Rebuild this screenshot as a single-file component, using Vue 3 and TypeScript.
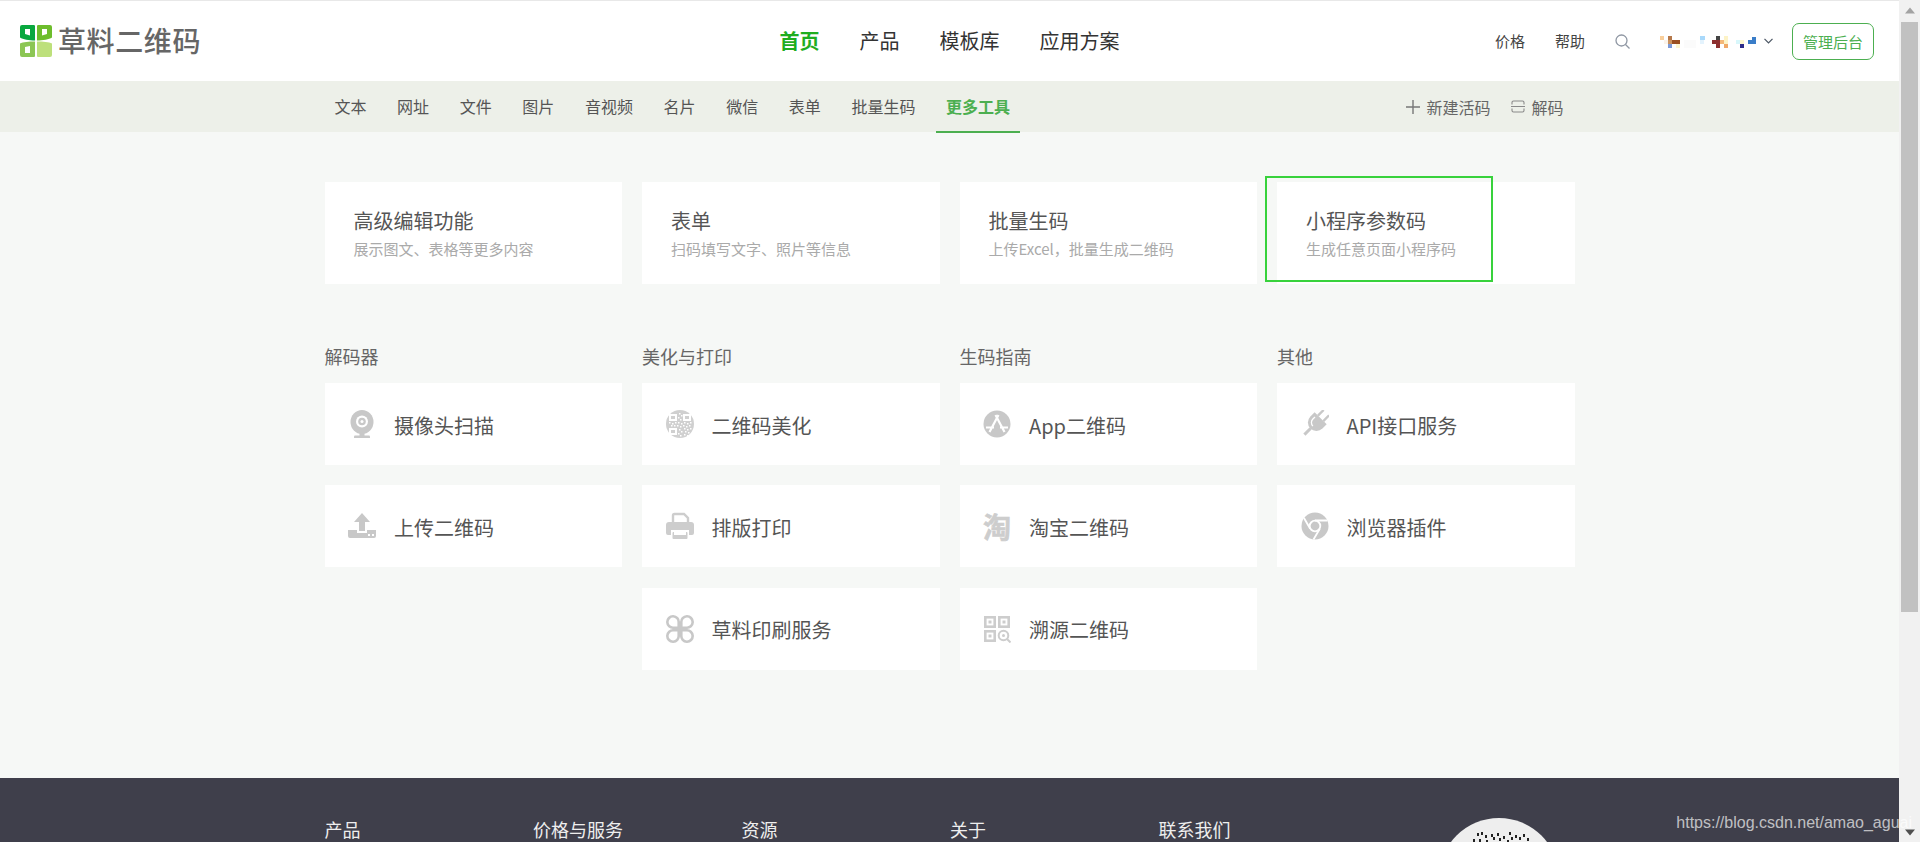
<script setup lang="ts">
type Tile = { icon: string; label: string };
type Section = { title: string; tiles: Tile[] };

const mainNav = ["产品", "模板库", "应用方案"];
const tabs = ["文本", "网址", "文件", "图片", "音视频", "名片", "微信", "表单", "批量生码"];

const cards = [
  { title: "高级编辑功能", desc: "展示图文、表格等更多内容" },
  { title: "表单", desc: "扫码填写文字、照片等信息" },
  { title: "批量生码", desc: "上传Excel，批量生成二维码" },
  { title: "小程序参数码", desc: "生成任意页面小程序码" },
];

const sections: Section[] = [
  {
    title: "解码器",
    tiles: [
      { icon: "cam", label: "摄像头扫描" },
      { icon: "upload", label: "上传二维码" },
    ],
  },
  {
    title: "美化与打印",
    tiles: [
      { icon: "qr", label: "二维码美化" },
      { icon: "print", label: "排版打印" },
      { icon: "clover", label: "草料印刷服务" },
    ],
  },
  {
    title: "生码指南",
    tiles: [
      { icon: "app", label: "App二维码" },
      { icon: "taobao", label: "淘宝二维码" },
      { icon: "trace", label: "溯源二维码" },
    ],
  },
  {
    title: "其他",
    tiles: [
      { icon: "plug", label: "API接口服务" },
      { icon: "chrome", label: "浏览器插件" },
    ],
  },
];

const footerCols = ["产品", "价格与服务", "资源", "关于", "联系我们"];

// blurred-out user name next to the chevron: [x, y, w, h, colour]
const mosaic: [number, number, number, number, string][] = [
  [0, 2, 4, 4, "#f9cf9c"],
  [4, 6, 4, 4, "#fbf3ea"],
  [8, 2, 4, 4, "#b5784a"],
  [8, 6, 4, 4, "#c9925f"],
  [12, 6, 8, 4, "#9a4f22"],
  [8, 10, 4, 4, "#7c9ad8"],
  [16, 10, 4, 4, "#fdf6cf"],
  [24, 6, 12, 8, "#fbfbfb"],
  [40, 2, 5, 4, "#a9d9fb"],
  [40, 6, 4, 4, "#e4f3fd"],
  [56, 2, 4, 4, "#444444"],
  [52, 6, 8, 4, "#8c2f2f"],
  [56, 10, 4, 4, "#8c2f2f"],
  [60, 6, 4, 4, "#f4b878"],
  [64, 2, 4, 8, "#fdf3c6"],
  [64, 10, 4, 4, "#f0a868"],
  [76, 6, 4, 4, "#d8f7fb"],
  [80, 6, 4, 4, "#fdf8cf"],
  [80, 10, 4, 4, "#2d2d8a"],
  [88, 6, 8, 4, "#3a7dc8"],
  [92, 3, 4, 3, "#3a7dc8"],
];

// white specks on the round QR icon
const qrSpecks: [number, number][] = [
  [13, 3], [15, 5], [12, 7], [14, 9], [3, 12], [6, 13], [9, 12], [12, 12], [15, 13], [18, 12],
  [21, 13], [24, 12], [5, 15], [8, 15], [11, 15], [14, 16], [17, 15], [20, 16], [23, 15],
  [13, 19], [15, 21], [12, 23], [14, 25], [18, 18], [21, 19], [24, 18], [19, 21], [22, 22],
  [18, 24], [21, 25],
];

// the top of the footer QR that shows above the fold: [x, y]
const footerDots: [number, number][] = [
  [38, 15], [42, 14], [46, 17], [52, 16], [54, 19], [58, 15], [60, 20], [64, 18],
  [70, 14], [72, 19], [76, 17], [80, 19], [84, 16], [88, 20], [34, 21], [40, 21],
  [47, 22], [68, 22],
];
</script>

<template>
  <div class="screen">
    <div class="page">
      <header class="top">
        <a class="logo">
          <svg class="logo-mark" viewBox="0 0 32 32" width="32" height="32">
            <path fill="#09a83f" fill-rule="evenodd" d="M2 0h12a1.5 1.5 0 0 1 1 1v14.5C9 15.500 3 14.500 0 12.500V2a2 2 0 0 1 2-2zM5 4v5l5 1.500V4z" />
            <path fill="#6dbd2c" fill-rule="evenodd" d="M18 0h12a2 2 0 0 1 2 2v10.500c-3 2-9 3-15 3V1a1.500 1.500 0 0 1 1-1zM22 4v6.500l5-1.500V4z" />
            <path fill="#8cc654" fill-rule="evenodd" d="M0 18.500c3-1.500 9-2 15-2V31a1 1 0 0 1-1 1H2a2 2 0 0 1-2-2zM5 22v6h5v-7z" />
            <path fill="#bde07b" d="M17 16.500c6 0 12 .5 15 2V30a2 2 0 0 1-2 2H18a1 1 0 0 1-1-1z" />
          </svg>
          <span class="logo-text">草料二维码</span>
        </a>

        <nav class="main-nav">
          <a class="main-link main-link--on">首页</a>
          <a v-for="item in mainNav" :key="item" class="main-link">{{ item }}</a>
        </nav>

        <div class="top-right">
          <a class="top-link">价格</a>
          <a class="top-link">帮助</a>
          <svg class="search" viewBox="0 0 15 15" width="15" height="15">
            <circle cx="6.500" cy="6.500" r="5.500" fill="none" stroke="#8f97a3" stroke-width="1.300" />
            <path d="M10.500 10.500L14.500 14.500" stroke="#8f97a3" stroke-width="1.300" />
          </svg>
          <svg class="mosaic" viewBox="0 0 96 14" width="96" height="14">
            <rect v-for="(b, i) in mosaic" :key="i" :x="b[0]" :y="b[1]" :width="b[2]" :height="b[3]" :fill="b[4]" />
          </svg>
          <svg class="chev" viewBox="0 0 9 6" width="9" height="6">
            <path d="M.5 .8L4.500 5L8.500 .8" fill="none" stroke="#4a5563" stroke-width="1.200" />
          </svg>
          <a class="admin">管理后台</a>
        </div>
      </header>

      <div class="subnav">
        <div class="wrap subnav-row">
          <div class="tabs">
            <a v-for="t in tabs" :key="t" class="tab">{{ t }}</a>
            <a class="tab tab--on">更多工具</a>
          </div>
          <div class="sub-actions">
            <a class="sub-action">
              <svg viewBox="0 0 14 14" width="14" height="14">
                <path d="M7 0V14M0 7H14" stroke="#777" stroke-width="1.400" />
              </svg>
              新建活码
            </a>
            <a class="sub-action">
              <svg viewBox="0 0 14 13" width="14" height="13">
                <path d="M1 4.500V2.500A1.500 1.500 0 0 1 2.500 1H11.500A1.500 1.500 0 0 1 13 2.500V4.500M1 8.500V10.500A1.500 1.500 0 0 0 2.500 12H11.500A1.500 1.500 0 0 0 13 10.500V8.500M0 6.500H14" fill="none" stroke="#8a8a8a" stroke-width="1.100" />
              </svg>
              解码
            </a>
          </div>
        </div>
      </div>

      <main class="main">
        <div class="wrap">
          <div class="grid">
            <a v-for="(c, i) in cards" :key="c.title" class="card">
              <div class="card-title">{{ c.title }}</div>
              <div class="card-desc">{{ c.desc }}</div>
              <span v-if="i === 3" class="marker" />
            </a>
          </div>

          <div class="grid sections">
            <section v-for="s in sections" :key="s.title" class="section">
              <h3 class="section-title">{{ s.title }}</h3>
              <a v-for="t in s.tiles" :key="t.label" class="tile">
                <span v-if="t.icon === 'taobao'" class="ico ico-text">淘</span>
                <svg v-else class="ico" viewBox="0 0 28 28" width="28" height="28">
                  <template v-if="t.icon === 'cam'">
                    <ellipse cx="14" cy="12" rx="11.500" ry="12" fill="#c8c8c8" />
                    <circle cx="14" cy="11.500" r="6" fill="#fff" />
                    <circle cx="14" cy="11.500" r="3.800" fill="#c8c8c8" />
                    <circle cx="14" cy="11.500" r="1.500" fill="#fff" />
                    <rect x="11.500" y="23" width="5" height="3" fill="#c8c8c8" />
                    <rect x="6" y="25.500" width="16" height="3" rx="1" fill="#c8c8c8" />
                  </template>
                  <template v-else-if="t.icon === 'upload'">
                    <path fill="#c8c8c8" d="M14 1L22 10H17V19H11V10H6Z" />
                    <path fill="#c8c8c8" d="M0 18H9V21H19V18H28V24A2 2 0 0 1 26 26H2A2 2 0 0 1 0 24Z" />
                    <rect x="20" y="22" width="2" height="2" fill="#fff" />
                    <rect x="24" y="22" width="2" height="2" fill="#fff" />
                  </template>
                  <template v-else-if="t.icon === 'qr'">
                    <circle cx="14" cy="14" r="14" fill="#d0d0d0" />
                    <g fill="#fff">
                      <path fill-rule="evenodd" d="M3 4H11V11H3ZM5 6V9H9V6Z" />
                      <path fill-rule="evenodd" d="M17 4H25V11H17ZM19 6V9H23V6Z" />
                      <path fill-rule="evenodd" d="M3 18H11V25H3ZM5 20V23H9V20Z" />
                      <rect v-for="(p, i) in qrSpecks" :key="i" :x="p[0]" :y="p[1]" width="1.500" height="1.500" />
                    </g>
                  </template>
                  <template v-else-if="t.icon === 'print'">
                    <path fill="none" stroke="#cdcdcd" stroke-width="2.400" d="M7 11V3.500A1.500 1.500 0 0 1 8.500 2H18L22 6V11" />
                    <path fill="#cdcdcd" d="M3 10H25A3 3 0 0 1 28 13V21A2 2 0 0 1 26 23H23V18H5V23H2A2 2 0 0 1 0 21V13A3 3 0 0 1 3 10Z" />
                    <rect x="6.500" y="20" width="15" height="7" rx="1" fill="#cdcdcd" />
                    <rect x="8" y="20" width="12" height="3" fill="#fff" />
                  </template>
                  <template v-else-if="t.icon === 'clover'">
                    <g fill="none" stroke="#c8c8c8" stroke-width="2.600">
                      <path d="M12.700 12.700H7.500A5.700 5.700 0 1 1 12.700 7.500Z" />
                      <path d="M15.300 12.700H20.500A5.700 5.700 0 1 0 15.300 7.500Z" />
                      <path d="M12.700 15.300H7.500A5.700 5.700 0 1 0 12.700 20.500Z" />
                      <path d="M15.300 15.300H20.500A5.700 5.700 0 1 1 15.300 20.500Z" />
                    </g>
                  </template>
                  <template v-else-if="t.icon === 'app'">
                    <circle cx="14" cy="14" r="13.500" fill="#c8c8c8" />
                    <path d="M15.500 5L6.500 22M12.500 5L21.500 22M3 17.500H11M17 17.500H25" fill="none" stroke="#fff" stroke-width="2.200" />
                  </template>
                  <template v-else-if="t.icon === 'trace'">
                    <g fill="none" stroke="#cdcdcd" stroke-width="2.600">
                      <rect x="2.300" y="2.300" width="9.400" height="9.400" />
                      <rect x="16.300" y="2.300" width="9.400" height="9.400" />
                      <rect x="2.300" y="16.300" width="9.400" height="9.400" />
                    </g>
                    <g fill="#cdcdcd">
                      <rect x="5.500" y="5.500" width="3" height="3" />
                      <rect x="19.500" y="5.500" width="3" height="3" />
                      <rect x="5.500" y="19.500" width="3" height="3" />
                    </g>
                    <circle cx="20.500" cy="20.500" r="4.800" fill="none" stroke="#cdcdcd" stroke-width="2" />
                    <circle cx="20.500" cy="20.500" r="1.500" fill="#cdcdcd" />
                    <path d="M24 24L27.500 27.500" stroke="#cdcdcd" stroke-width="2" />
                  </template>
                  <template v-else-if="t.icon === 'plug'">
                    <g transform="rotate(45 14 14)">
                      <rect x="9" y="-2" width="2.400" height="8" fill="#c8c8c8" />
                      <rect x="16.600" y="-2" width="2.400" height="8" fill="#c8c8c8" />
                      <path fill="#c8c8c8" d="M5.500 6H22.500V12A8.500 8.500 0 0 1 5.500 12Z" />
                      <path fill="none" stroke="#fff" stroke-width="1.300" d="M9 9V12A5 5 0 0 0 14 17" />
                      <rect x="12.500" y="20" width="3" height="9" fill="#c8c8c8" />
                    </g>
                  </template>
                  <template v-else-if="t.icon === 'chrome'">
                    <circle cx="14" cy="14" r="13.500" fill="#c8c8c8" />
                    <circle cx="14" cy="14" r="5.300" fill="#c8c8c8" stroke="#fff" stroke-width="1.800" />
                    <path d="M14 8.500H26.500M9.200 16.800L3 6M18.800 16.800L12.500 27.500" fill="none" stroke="#fff" stroke-width="1.800" />
                  </template>
                </svg>
                <span class="tile-label">{{ t.label }}</span>
              </a>
            </section>
          </div>
        </div>
      </main>

      <footer class="foot">
        <div class="wrap foot-row">
          <div v-for="c in footerCols" :key="c" class="foot-col">{{ c }}</div>
          <svg class="foot-qr" viewBox="0 0 120 120" width="120" height="120">
            <circle cx="60" cy="60" r="60" fill="#eeeeee" />
            <rect v-for="(d, i) in footerDots" :key="i" :x="d[0]" :y="d[1]" width="2" height="3" fill="#222" />
          </svg>
        </div>
      </footer>
    </div>

    <div class="scrollbar">
      <svg class="arrow" viewBox="0 0 20 20" width="20" height="20"><path d="M5 13L10 7L15 13Z" fill="#a3a3a3" /></svg>
      <div class="thumb" />
      <svg class="arrow arrow--down" viewBox="0 0 20 20" width="20" height="20"><path d="M5 8L10 14L15 8Z" fill="#505050" /></svg>
    </div>

    <div class="watermark">https://blog.csdn.net/amao_aguai</div>
  </div>
</template>

<style scoped>
.screen {
  position: relative;
  display: flex;
  height: 842px;
  overflow: hidden;
  font-family: "Noto Sans CJK SC", "Noto Sans", sans-serif;
  color: #555;
}
.page {
  flex: 1;
  min-width: 0;
  display: flex;
  flex-direction: column;
  background: #f6f8f6;
}
.wrap {
  width: 1250px;
  margin: 0 auto;
}

/* top bar */
.top {
  height: 80px;
  flex: none;
  border-top: 1px solid #e8e8e8;
  background: #fff;
  display: grid;
  grid-template-columns: 1fr auto 1fr;
  align-items: center;
}
.logo {
  display: flex;
  align-items: center;
  gap: 6px;
  padding-left: 20px;
}
.logo-mark { flex: none; }
.logo-text {
  margin-top: -2px;
  font-size: 28px;
  font-weight: 500;
  line-height: 32px;
  letter-spacing: 0.6px;
  color: #666;
}
.main-nav {
  display: flex;
  gap: 40px;
}
.main-link {
  font-size: 20px;
  line-height: 28px;
  color: #333;
}
.main-link--on {
  font-weight: 700;
  color: #1fad1f;
}
.top-right {
  display: flex;
  align-items: center;
  justify-content: flex-end;
  padding-right: 25px;
}
.top-link {
  font-size: 15px;
  line-height: 20px;
  color: #444;
  margin-right: 30px;
}
.search { margin-right: 30px; }
.mosaic { margin-right: 8px; width: 96px; }
.chev { margin-right: 19px; }
.admin {
  width: 82px;
  height: 37px;
  box-sizing: border-box;
  border: 1px solid #4caf50;
  border-radius: 7px;
  font-size: 15px;
  line-height: 35px;
  text-align: center;
  color: #4caf50;
}

/* sub navigation */
.subnav {
  height: 51px;
  flex: none;
  background: #edf0e9;
}
.subnav-row {
  height: 100%;
  display: flex;
  justify-content: space-between;
  padding-right: 11px;
  box-sizing: border-box;
}
.tabs {
  display: flex;
  gap: 10.6px;
}
.tab {
  height: 52px;
  box-sizing: border-box;
  padding: 0 10px;
  font-size: 16px;
  line-height: 50px;
  color: #555;
}
.tab--on {
  color: #4caf50;
  font-weight: 700;
  border-bottom: 2px solid #4caf50;
}
.sub-actions {
  display: flex;
  gap: 21px;
}
.sub-action {
  display: flex;
  align-items: center;
  gap: 6px;
  font-size: 16px;
  color: #666;
}

/* grids */
.main {
  flex: none;
  height: 646px;
  padding-top: 50px;
  box-sizing: border-box;
}
.grid {
  display: grid;
  grid-template-columns: repeat(4, 297.5px);
  column-gap: 20px;
}
.card {
  position: relative;
  height: 102px;
  box-sizing: border-box;
  padding: 25px 0 0 29px;
  background: #fff;
}
.card-title {
  font-size: 20px;
  line-height: 28px;
  color: #555;
}
.card-desc {
  margin-top: 3px;
  font-size: 15px;
  line-height: 22px;
  color: #aaa;
}
.marker {
  position: absolute;
  left: -12.500px;
  top: -6px;
  width: 228px;
  height: 106px;
  box-sizing: border-box;
  border: 2px solid #38d23c;
  pointer-events: none;
}
.sections { margin-top: 60px; }
.section {
  display: flex;
  flex-direction: column;
  gap: 20.400px;
}
.section-title {
  margin: 0 0 -5.400px;
  font-size: 18px;
  font-weight: 400;
  line-height: 24px;
  color: #666;
}
.tile {
  height: 82px;
  box-sizing: border-box;
  padding-left: 23.500px;
  display: flex;
  align-items: center;
  gap: 18px;
  background: #fff;
}
.ico {
  flex: none;
  width: 28px;
  height: 28px;
}
.ico-text {
  font-size: 28px;
  font-weight: 700;
  line-height: 28px;
  color: #cdcdcd;
  -webkit-text-stroke: 0.6px #cdcdcd;
}
.tile-label {
  padding-top: 3px;
  font-size: 20px;
  line-height: 28px;
  color: #555;
}

/* footer */
.foot {
  flex: 1;
  overflow: hidden;
  background: #3f3f4b;
}
.foot-row {
  display: flex;
  align-items: flex-start;
  padding-top: 39px;
}
.foot-col {
  flex: none;
  width: 208.500px;
  font-size: 18px;
  line-height: 24px;
  color: #eee;
}
.foot-qr {
  flex: none;
  margin: 1px 0 0 71.500px;
}

/* scrollbar of the captured window */
.scrollbar {
  width: 21px;
  flex: none;
  display: flex;
  flex-direction: column;
  align-items: center;
  background: #f1f1f1;
}
.arrow {
  flex: none;
  height: 21px;
}
.thumb {
  flex: none;
  width: 17px;
  height: 590px;
  margin-top: 1px;
  background: #c1c1c1;
}
.arrow--down { margin-top: auto; }
.watermark {
  position: absolute;
  right: 8px;
  top: 813px;
  font-family: "Liberation Sans", Arial, sans-serif;
  font-size: 16px;
  line-height: 20px;
  color: rgba(255, 255, 255, 0.68);
  pointer-events: none;
}
</style>

<style>
html,
body {
  margin: 0;
  overflow: hidden;
}
a {
  text-decoration: none;
}
</style>
